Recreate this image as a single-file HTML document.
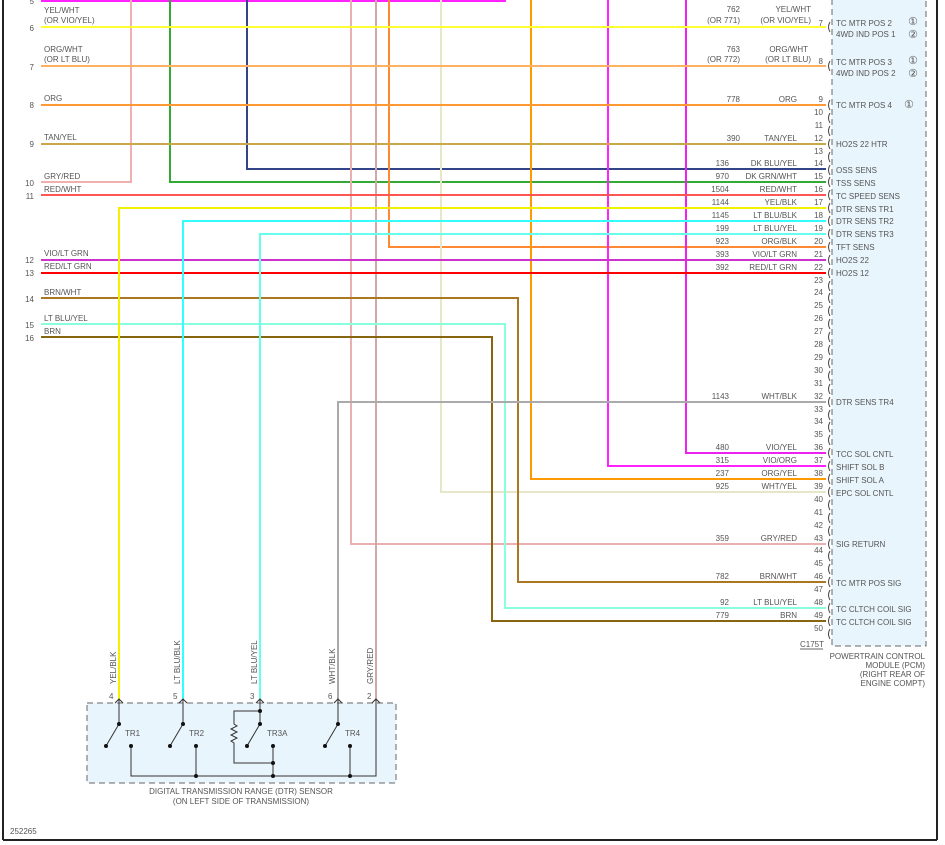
<!DOCTYPE html>
<html><head><meta charset="utf-8"><style>
html,body{margin:0;padding:0;background:#fff}
svg{display:block}
text{font-family:"Liberation Sans",sans-serif;font-size:8px;fill:#555}
.r{text-anchor:end}
.c{font-family:"DejaVu Sans",sans-serif;font-size:11px}
</style></head><body>
<svg width="945" height="845" viewBox="0 0 945 845" xmlns="http://www.w3.org/2000/svg">
<rect x="0" y="0" width="945" height="845" fill="#fff"/>
<line x1="3" y1="0" x2="3" y2="840" stroke="#222" stroke-width="2"/>
<line x1="937" y1="0" x2="937" y2="840" stroke="#222" stroke-width="2"/>
<line x1="3" y1="840" x2="937" y2="840" stroke="#222" stroke-width="2"/>
<text x="10" y="834">252265</text>

<rect x="832" y="-5" width="94" height="651" fill="#e9f5fc" stroke="#666" stroke-dasharray="6,4"/>

<g fill="none" stroke-width="2">
<polyline points="41,1 505,1 505,-5" stroke="#ff22ff"/>
<polyline points="41,182 131,182 131,-5" stroke="#f0b0b0"/>
<polyline points="170,-5 170,182 826,182" stroke="#33aa33"/>
<polyline points="247,-5 247,169 826,169" stroke="#334488"/>
<polyline points="351,-5 351,544 826,544" stroke="#e8b0b0"/>
<line x1="376" y1="-5" x2="376" y2="700" stroke="#d0a8a8"/>
<polyline points="389,-5 389,247 826,247" stroke="#ff8833"/>
<polyline points="441,-5 441,492 826,492" stroke="#e6e6c8"/>
<polyline points="531,-5 531,479 826,479" stroke="#ff9900"/>
<polyline points="608,-5 608,466 826,466" stroke="#ff22ff"/>
<polyline points="686,-5 686,453 826,453" stroke="#ee22ee"/>
<line x1="41" y1="27" x2="826" y2="27" stroke="#ffff33"/>
<line x1="41" y1="66" x2="826" y2="66" stroke="#ffb060"/>
<line x1="41" y1="105" x2="826" y2="105" stroke="#ff9933"/>
<line x1="41" y1="144" x2="826" y2="144" stroke="#c8a848"/>
<line x1="41" y1="195" x2="826" y2="195" stroke="#ff5555"/>
<line x1="41" y1="260" x2="826" y2="260" stroke="#cc33cc"/>
<line x1="41" y1="273" x2="826" y2="273" stroke="#ff0000"/>
<polyline points="41,298 518,298 518,582 826,582" stroke="#aa7722"/>
<polyline points="41,324 505,324 505,608 826,608" stroke="#88ffdd"/>
<polyline points="41,337 492,337 492,621 826,621" stroke="#886611"/>
<polyline points="119,700 119,208 826,208" stroke="#f2f200"/>
<polyline points="183,700 183,221 826,221" stroke="#33ffff"/>
<polyline points="260,700 260,234 826,234" stroke="#66ffee"/>
<polyline points="338,700 338,402 826,402" stroke="#aaaaaa"/>
</g>

<g fill="none" stroke="#444" stroke-width="1">
<path d="M830,22 q-3,5 0,10"/><path d="M830,61 q-3,5 0,10"/><path d="M830,100 q-3,5 0,10"/>
<path d="M830,113 q-3,5 0,10"/><path d="M830,126 q-3,5 0,10"/><path d="M830,139 q-3,5 0,10"/><path d="M830,152 q-3,5 0,10"/><path d="M830,165 q-3,5 0,10"/><path d="M830,177 q-3,5 0,10"/><path d="M830,190 q-3,5 0,10"/><path d="M830,203 q-3,5 0,10"/><path d="M830,216 q-3,5 0,10"/><path d="M830,229 q-3,5 0,10"/><path d="M830,242 q-3,5 0,10"/><path d="M830,255 q-3,5 0,10"/><path d="M830,268 q-3,5 0,10"/><path d="M830,281 q-3,5 0,10"/><path d="M830,293 q-3,5 0,10"/><path d="M830,306 q-3,5 0,10"/><path d="M830,319 q-3,5 0,10"/><path d="M830,332 q-3,5 0,10"/><path d="M830,345 q-3,5 0,10"/><path d="M830,358 q-3,5 0,10"/><path d="M830,371 q-3,5 0,10"/><path d="M830,384 q-3,5 0,10"/><path d="M830,397 q-3,5 0,10"/><path d="M830,410 q-3,5 0,10"/><path d="M830,422 q-3,5 0,10"/><path d="M830,435 q-3,5 0,10"/><path d="M830,448 q-3,5 0,10"/><path d="M830,461 q-3,5 0,10"/><path d="M830,474 q-3,5 0,10"/><path d="M830,487 q-3,5 0,10"/><path d="M830,500 q-3,5 0,10"/><path d="M830,513 q-3,5 0,10"/><path d="M830,526 q-3,5 0,10"/><path d="M830,539 q-3,5 0,10"/><path d="M830,551 q-3,5 0,10"/><path d="M830,564 q-3,5 0,10"/><path d="M830,577 q-3,5 0,10"/><path d="M830,590 q-3,5 0,10"/><path d="M830,603 q-3,5 0,10"/><path d="M830,616 q-3,5 0,10"/><path d="M830,629 q-3,5 0,10"/>
</g>
<line x1="800" y1="649" x2="823" y2="649" stroke="#666"/>
<text x="800" y="647">C175T</text>

<text class="r" x="34" y="4">5</text>
<text x="44" y="13">YEL/WHT</text><text x="44" y="23">(OR VIO/YEL)</text><text class="r" x="34" y="31">6</text>
<text x="44" y="52">ORG/WHT</text><text x="44" y="62">(OR LT BLU)</text><text class="r" x="34" y="70">7</text>
<text x="44" y="101">ORG</text><text class="r" x="34" y="108">8</text>
<text x="44" y="140">TAN/YEL</text><text class="r" x="34" y="147">9</text>
<text x="44" y="179">GRY/RED</text><text class="r" x="34" y="186">10</text>
<text x="44" y="192">RED/WHT</text><text class="r" x="34" y="199">11</text>
<text x="44" y="256">VIO/LT GRN</text><text class="r" x="34" y="263">12</text>
<text x="44" y="269">RED/LT GRN</text><text class="r" x="34" y="276">13</text>
<text x="44" y="295">BRN/WHT</text><text class="r" x="34" y="302">14</text>
<text x="44" y="321">LT BLU/YEL</text><text class="r" x="34" y="328">15</text>
<text x="44" y="334">BRN</text><text class="r" x="34" y="341">16</text>

<text class="r" x="740" y="12">762</text><text class="r" x="740" y="23">(OR 771)</text><text class="r" x="811" y="12">YEL/WHT</text><text class="r" x="811" y="23">(OR VIO/YEL)</text><text class="r" x="823" y="26">7</text>
<text class="r" x="740" y="52">763</text><text class="r" x="740" y="62">(OR 772)</text><text class="r" x="808" y="52">ORG/WHT</text><text class="r" x="811" y="62">(OR LT BLU)</text><text class="r" x="823" y="64">8</text>
<text class="r" x="740" y="102">778</text><text class="r" x="797" y="102">ORG</text><text class="r" x="823" y="102">9</text>
<text class="r" x="823" y="115">10</text><text class="r" x="823" y="128">11</text>
<text class="r" x="740" y="141">390</text><text class="r" x="797" y="141">TAN/YEL</text><text class="r" x="823" y="141">12</text>
<text class="r" x="823" y="154">13</text>
<text class="r" x="729" y="166">136</text><text class="r" x="797" y="166">DK BLU/YEL</text><text class="r" x="823" y="166">14</text>
<text class="r" x="729" y="179">970</text><text class="r" x="797" y="179">DK GRN/WHT</text><text class="r" x="823" y="179">15</text>
<text class="r" x="729" y="192">1504</text><text class="r" x="797" y="192">RED/WHT</text><text class="r" x="823" y="192">16</text>
<text class="r" x="729" y="205">1144</text><text class="r" x="797" y="205">YEL/BLK</text><text class="r" x="823" y="205">17</text>
<text class="r" x="729" y="218">1145</text><text class="r" x="797" y="218">LT BLU/BLK</text><text class="r" x="823" y="218">18</text>
<text class="r" x="729" y="231">199</text><text class="r" x="797" y="231">LT BLU/YEL</text><text class="r" x="823" y="231">19</text>
<text class="r" x="729" y="244">923</text><text class="r" x="797" y="244">ORG/BLK</text><text class="r" x="823" y="244">20</text>
<text class="r" x="729" y="257">393</text><text class="r" x="797" y="257">VIO/LT GRN</text><text class="r" x="823" y="257">21</text>
<text class="r" x="729" y="270">392</text><text class="r" x="797" y="270">RED/LT GRN</text><text class="r" x="823" y="270">22</text>
<text class="r" x="823" y="283">23</text><text class="r" x="823" y="295">24</text><text class="r" x="823" y="308">25</text><text class="r" x="823" y="321">26</text><text class="r" x="823" y="334">27</text><text class="r" x="823" y="347">28</text><text class="r" x="823" y="360">29</text><text class="r" x="823" y="373">30</text><text class="r" x="823" y="386">31</text>
<text class="r" x="729" y="399">1143</text><text class="r" x="797" y="399">WHT/BLK</text><text class="r" x="823" y="399">32</text>
<text class="r" x="823" y="412">33</text><text class="r" x="823" y="424">34</text><text class="r" x="823" y="437">35</text>
<text class="r" x="729" y="450">480</text><text class="r" x="797" y="450">VIO/YEL</text><text class="r" x="823" y="450">36</text>
<text class="r" x="729" y="463">315</text><text class="r" x="797" y="463">VIO/ORG</text><text class="r" x="823" y="463">37</text>
<text class="r" x="729" y="476">237</text><text class="r" x="797" y="476">ORG/YEL</text><text class="r" x="823" y="476">38</text>
<text class="r" x="729" y="489">925</text><text class="r" x="797" y="489">WHT/YEL</text><text class="r" x="823" y="489">39</text>
<text class="r" x="823" y="502">40</text><text class="r" x="823" y="515">41</text><text class="r" x="823" y="528">42</text>
<text class="r" x="729" y="541">359</text><text class="r" x="797" y="541">GRY/RED</text><text class="r" x="823" y="541">43</text>
<text class="r" x="823" y="553">44</text><text class="r" x="823" y="566">45</text>
<text class="r" x="729" y="579">782</text><text class="r" x="797" y="579">BRN/WHT</text><text class="r" x="823" y="579">46</text>
<text class="r" x="823" y="592">47</text>
<text class="r" x="729" y="605">92</text><text class="r" x="797" y="605">LT BLU/YEL</text><text class="r" x="823" y="605">48</text>
<text class="r" x="729" y="618">779</text><text class="r" x="797" y="618">BRN</text><text class="r" x="823" y="618">49</text>
<text class="r" x="823" y="631">50</text>

<text x="836" y="26">TC MTR POS 2</text><text x="836" y="37">4WD IND POS 1</text>
<text x="836" y="65">TC MTR POS 3</text><text x="836" y="76">4WD IND POS 2</text>
<text x="836" y="108">TC MTR POS 4</text>
<text class="c" x="908" y="25">①</text><text class="c" x="908" y="38">②</text><text class="c" x="908" y="64">①</text><text class="c" x="908" y="77">②</text><text class="c" x="904" y="108">①</text>
<text x="836" y="147">HO2S 22 HTR</text>
<text x="836" y="173">OSS SENS</text><text x="836" y="186">TSS SENS</text><text x="836" y="199">TC SPEED SENS</text>
<text x="836" y="212">DTR SENS TR1</text><text x="836" y="224">DTR SENS TR2</text><text x="836" y="237">DTR SENS TR3</text>
<text x="836" y="250">TFT SENS</text><text x="836" y="263">HO2S 22</text><text x="836" y="276">HO2S 12</text>
<text x="836" y="405">DTR SENS TR4</text>
<text x="836" y="457">TCC SOL CNTL</text><text x="836" y="470">SHIFT SOL B</text><text x="836" y="483">SHIFT SOL A</text><text x="836" y="496">EPC SOL CNTL</text>
<text x="836" y="547">SIG RETURN</text><text x="836" y="586">TC MTR POS SIG</text>
<text x="836" y="612">TC CLTCH COIL SIG</text><text x="836" y="625">TC CLTCH COIL SIG</text>
<text class="r" x="925" y="659">POWERTRAIN CONTROL</text><text class="r" x="925" y="668">MODULE (PCM)</text>
<text class="r" x="925" y="677">(RIGHT REAR OF</text><text class="r" x="925" y="686">ENGINE COMPT)</text>

<rect x="87" y="703" width="309" height="80" fill="#e9f5fc" stroke="#666" stroke-dasharray="6,4"/>
<g font-size="8">
<text transform="translate(116,684) rotate(-90)">YEL/BLK</text>
<text transform="translate(180,684) rotate(-90)">LT BLU/BLK</text>
<text transform="translate(257,684) rotate(-90)">LT BLU/YEL</text>
<text transform="translate(335,684) rotate(-90)">WHT/BLK</text>
<text transform="translate(373,684) rotate(-90)">GRY/RED</text>
</g>
<text x="109" y="699">4</text><text x="173" y="699">5</text><text x="250" y="699">3</text><text x="328" y="699">6</text><text x="367" y="699">2</text>
<g fill="none" stroke="#333" stroke-width="1">
<path d="M115,703 l4,-4 l4,4 M179,703 l4,-4 l4,4 M256,703 l4,-4 l4,4 M334,703 l4,-4 l4,4 M372,703 l4,-4 l4,4"/>
<path d="M119,700 V724 L106,746 M183,700 V724 L170,746 M260,700 V724 L247,746 M338,700 V724 L325,746"/>
<path d="M376,700 V776 H131 V746 M196,746 V776 M273,746 V776 M350,746 V776"/>
<path d="M260,711 H234 V724 l3,2 l-6,3 l6,3 l-6,3 l6,3 l-6,3 l3,2 V763 H273"/>
</g>
<g fill="#111">
<circle cx="119" cy="724" r="2"/><circle cx="106" cy="746" r="2"/><circle cx="131" cy="746" r="2"/>
<circle cx="183" cy="724" r="2"/><circle cx="170" cy="746" r="2"/><circle cx="196" cy="746" r="2"/><circle cx="196" cy="776" r="2"/>
<circle cx="260" cy="711" r="2"/><circle cx="260" cy="724" r="2"/><circle cx="247" cy="746" r="2"/><circle cx="273" cy="746" r="2"/><circle cx="273" cy="763" r="2"/><circle cx="273" cy="776" r="2"/>
<circle cx="338" cy="724" r="2"/><circle cx="325" cy="746" r="2"/><circle cx="350" cy="746" r="2"/><circle cx="350" cy="776" r="2"/>
</g>
<text x="125" y="736">TR1</text><text x="189" y="736">TR2</text><text x="267" y="736">TR3A</text><text x="345" y="736">TR4</text>
<text x="241" y="794" text-anchor="middle">DIGITAL TRANSMISSION RANGE (DTR) SENSOR</text>
<text x="241" y="804" text-anchor="middle">(ON LEFT SIDE OF TRANSMISSION)</text>
</svg>
</body></html>
